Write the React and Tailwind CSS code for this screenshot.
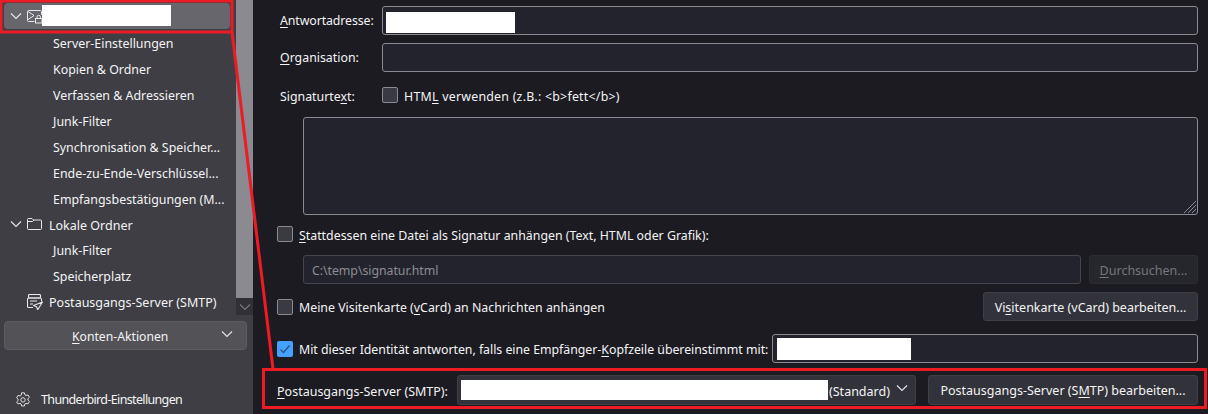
import React from 'react'

const FONT = "font-['Noto_Sans',sans-serif]"

const Chevron = ({ className = '' }) => (
  <svg width="12" height="12" viewBox="0 0 12 12" fill="none" stroke="currentColor" strokeWidth="1.1" className={className}>
    <path d="M1 3.5 L6 8.5 L11 3.5" />
  </svg>
)

const AccountIcon = () => (
  <svg width="16" height="16" viewBox="0 0 16 16" fill="none" stroke="#e8e8ea" strokeWidth="1" className="shrink-0">
    <path d="M7.5 13.5H1.5a1 1 0 0 1-1-1v-9a1 1 0 0 1 1-1h12a1 1 0 0 1 1 1v3.5" />
    <path d="M1 3.5l6 4-6 4" />
    <rect x="8.5" y="10.5" width="6.5" height="4.5" />
    <path d="M10 10.5V9a1.7 1.7 0 0 1 3.4 0v1.5" />
  </svg>
)

const FolderIcon = () => (
  <svg width="16" height="16" viewBox="0 0 16 16" fill="none" stroke="#e8e8ea" strokeWidth="1" className="shrink-0">
    <path d="M1.5 13.5a1 1 0 0 1-1-1v-9a1 1 0 0 1 1-1h3.5l1.5 1.5h7a1 1 0 0 1 1 1v7.5a1 1 0 0 1-1 1z" />
    <path d="M.5 5.5h5l1.5-1.5" />
  </svg>
)

const OutboxIcon = () => (
  <svg width="16" height="16" viewBox="0 0 16 16" fill="none" stroke="#e8e8ea" strokeWidth="1.1" className="shrink-0">
    <rect x="1.5" y="0.5" width="12" height="3.5" rx="1" />
    <path d="M6 13.5H1.5a1 1 0 0 1-1-1v-7a1.500 1.500 0 0 1 1-1.500h12a1.500 1.500 0 0 1 1 1.500v2" />
    <path d="M3 7h7M3 10h3" />
    <path d="M15.500 8 6.500 11.500l3 1.200 1.200 3z" strokeLinejoin="round" />
  </svg>
)

const GearIcon = () => (
  <svg width="16" height="16" viewBox="0 0 16 16" fill="none" stroke="#e0e0e2" strokeWidth="1" className="shrink-0">
    <path d="M6.600.8h2.800l.4 2 1.200.7 2-.6 1.400 2.400-1.500 1.400v1.400l1.500 1.400-1.400 2.400-2-.6-1.200.7-.4 2H6.600l-.4-2-1.200-.7-2 .6L1.600 10l1.500-1.400V7.200L1.600 5.800 3 3.400l2 .6 1.200-.7z" strokeLinejoin="round" />
    <circle cx="8" cy="7.900" r="2.200" />
  </svg>
)

const Mask = ({ className }) => <span className={`block bg-white shrink-0 ${className}`} />

const Key = ({ children }) => <span className="underline underline-offset-2">{children}</span>

const SubItem = ({ children }) => (
  <div className="h-[26px] flex items-center pl-[53px] pt-[3px] text-[12.4px] text-[#f4f4f5] whitespace-nowrap">
    {children}
  </div>
)

const Sidebar = () => (
  <aside className="w-[253px] shrink-0 bg-[#3e3e44] flex flex-col">
    <div className="flex h-[315px] overflow-hidden">
      <div className="w-[236px] shrink-0 flex flex-col">
        <div className="h-[26px] mt-[3px] ml-1 mr-[6px] mb-px rounded bg-[#66666c] flex items-center pl-[6px]">
          <Chevron className="text-[#e8e8ea] mr-[5px]" />
          <AccountIcon />
          <Mask className="w-[129px] h-[21px] ml-[-1px]" />
        </div>
        <SubItem>Server-Einstellungen</SubItem>
        <SubItem>Kopien &amp; Ordner</SubItem>
        <SubItem>Verfassen &amp; Adressieren</SubItem>
        <SubItem>Junk-Filter</SubItem>
        <SubItem>Synchronisation &amp; Speicher...</SubItem>
        <SubItem>Ende-zu-Ende-Verschlüssel...</SubItem>
        <SubItem>Empfangsbestätigungen (M...</SubItem>
        <div className="h-[26px] flex items-center pl-[10px] text-[12.5px] text-[#f4f4f5]">
          <Chevron className="text-[#e8e8ea] mr-[5px]" />
          <FolderIcon />
          <span className="ml-[6px] pt-[4px]">Lokale Ordner</span>
        </div>
        <SubItem>Junk-Filter</SubItem>
        <SubItem>Speicherplatz</SubItem>
        <div className="h-[26px] flex items-center pl-[27px] text-[12.5px] text-[#f4f4f5] whitespace-nowrap">
          <OutboxIcon />
          <span className="ml-[6px] pt-[3px]">Postausgangs-Server (SMTP)</span>
        </div>
      </div>
      <div className="w-[17px] flex flex-col">
        <div className="h-[298px] bg-[#8a8a90]" />
        <div className="h-[17px] bg-[#303036] flex items-center justify-center">
          <Chevron className="text-[#77777c]" />
        </div>
      </div>
    </div>
    <div className="mt-[6px] ml-1 w-[243px] h-[29px] rounded border border-[#5c5c62] bg-[#525257] flex items-center text-[12.2px] text-[#f4f4f5]">
      <span className="ml-[67px] pt-[4px]"><Key>K</Key>onten-Aktionen</span>
      <Chevron className="ml-auto mr-[13px] -mt-1 text-[#e8e8ea]" />
    </div>
    <div className="mt-[41px] flex items-center pl-[15px] text-[12.5px] tracking-[-0.65px] text-[#f4f4f5] whitespace-nowrap">
      <GearIcon />
      <span className="ml-[10px]">Thunderbird-Einstellungen</span>
    </div>
  </aside>
)

const TextInput = ({ className = '', children }) => (
  <div className={`h-[29px] rounded-[3px] border border-[#8a8a90] bg-[#23232d] flex items-center ${className}`}>
    {children}
  </div>
)

const Checkbox = ({ checked }) => (
  checked ? (
    <span className="w-4 h-4 shrink-0 rounded-[2px] bg-[#45a1ff] flex items-center justify-center">
      <svg width="12" height="12" viewBox="0 0 12 12" fill="none" stroke="#2d4f7a" strokeWidth="1.2">
        <path d="M1.500 6.500 4.500 9.500 10.500 2.500" />
      </svg>
    </span>
  ) : (
    <span className="w-4 h-4 shrink-0 rounded-[2px] border border-[#8a8a90] bg-[#3a3a42]" />
  )
)

const Button = ({ className = '', textClass = 'pt-[2px]', children }) => (
  <div className={`shrink-0 rounded-[3px] border border-[#3f3f47] bg-[#32323a] flex items-center justify-center text-[12.5px] text-[#f4f4f5] whitespace-nowrap ${className}`}>
    <span className={textClass}>{children}</span>
  </div>
)

const Main = () => (
  <main className="flex-1 min-w-0 bg-[#1c1b22] pl-[24px] pr-[10px] pt-[6px] flex flex-col text-[12.35px] text-[#f4f4f5] whitespace-nowrap">
    <div className="flex items-center h-[29px] pl-[3px]">
      <span className="w-[102px] pt-[2px] tracking-[-0.1px]"><Key>A</Key>ntwortadresse:</span>
      <TextInput className="flex-1 pl-[3px]"><Mask className="w-[129px] h-[21px] mt-[4px]" /></TextInput>
    </div>
    <div className="flex items-center h-[29px] pl-[3px] mt-2">
      <span className="w-[102px] pt-[2px]"><Key>O</Key>rganisation:</span>
      <TextInput className="flex-1" />
    </div>
    <div className="flex items-center h-4 pl-[3px] mt-[15px]">
      <span className="w-[102px] pt-[5px]">Signaturte<Key>x</Key>t:</span>
      <Checkbox />
      <span className="ml-[6px] pt-[5px] tracking-[0.25px]">HTM<Key>L</Key> verwenden (z.B.: &lt;b&gt;fett&lt;/b&gt;)</span>
    </div>
    <div className="ml-[26px] mt-[14px] h-[98px] rounded-[3px] border border-[#8a8a90] bg-[#23232d] flex items-end justify-end">
      <svg width="14" height="14" viewBox="0 0 14 14" stroke="#8a8a90" strokeWidth="1">
        <path d="M1 13 13 1M5 13l8-8M9 13l4-4" />
      </svg>
    </div>
    <div className="flex items-center h-4 mt-[11px]">
      <Checkbox />
      <span className="ml-[6px] pt-[5px]"><Key>S</Key>tattdessen eine Datei als Signatur anhängen (Text, HTML oder Grafik):</span>
    </div>
    <div className="flex items-center gap-2 ml-[26px] mt-[13px]">
      <div className="flex-1 h-[29px] rounded-[3px] border border-[#45454c] bg-[#23232d] flex items-center pl-2 text-[#8d8d92]"><span className="pt-[4px] tracking-[-0.05px]">C:\temp\signatur.html</span></div>
      <div className="w-[109px] h-[29px] rounded-[3px] border border-[#2c2c33] bg-[#26262d] flex items-center justify-center text-[12.5px] text-[#77777c]"><span className="pt-[4px]"><Key>D</Key>urchsuchen...</span></div>
    </div>
    <div className="flex items-center h-[29px] mt-2">
      <Checkbox />
      <span className="ml-[6px] pt-[4px]">Meine Visitenkarte (<Key>v</Key>Card) an Nachrichten anhängen</span>
      <Button className="ml-auto w-[215px] h-[29px]" textClass="pt-[4px]">Vi<Key>s</Key>itenkarte (vCard) bearbeiten...</Button>
    </div>
    <div className="flex items-center h-[29px] mt-[13px]">
      <Checkbox checked />
      <span className="ml-[6px] pt-[4px] tracking-[-0.03px]">Mit dieser Identität antworten, falls eine Empfänger-<Key>K</Key>opfzeile übereinstimmt mit:</span>
      <TextInput className="ml-auto w-[426px] pl-1"><Mask className="w-[134px] h-[22px] mt-px" /></TextInput>
    </div>
    <div className="flex items-center h-[30px] mt-[12px]">
      <span className="pt-[4px] text-[12.5px]"><Key>P</Key>ostausgangs-Server (SMTP):</span>
      <div className="ml-auto w-[459px] h-[30px] rounded-[3px] border border-[#3f3f47] bg-[#32323a] flex items-center pl-[3px] text-[12.5px]">
        <Mask className="w-[367px] h-[20px]" />
        <span className="ml-px pt-[4px]">(Standard)</span>
        <Chevron className="ml-auto mr-[7px] -mt-1 text-[#e8e8ea]" />
      </div>
      <Button className="ml-3 w-[270px] h-[30px]">Postausgangs-Server (S<Key>M</Key>TP) bearbeiten...</Button>
    </div>
  </main>
)

// red annotation drawn over the screenshot
const Annotation = () => (
  <svg width="1208" height="414" className="absolute inset-0 pointer-events-none" fill="none" stroke="#ed1c24" strokeWidth="3">
    <rect x="1" y="1" width="231" height="31" />
    <path d="M232 32 273 369" />
    <rect x="263.500" y="369.500" width="942" height="38" />
  </svg>
)

export default function App() {
  return (
    <div className={`relative w-[1208px] h-[414px] overflow-hidden flex ${FONT}`}>
      <Sidebar />
      <Main />
      <Annotation />
    </div>
  )
}
